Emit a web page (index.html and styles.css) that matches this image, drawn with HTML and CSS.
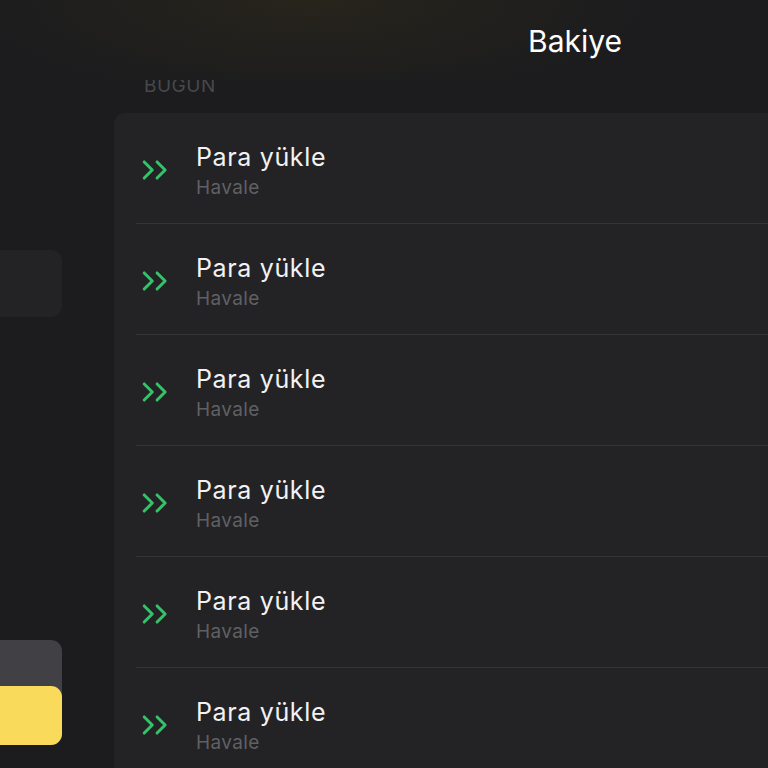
FILE: index.html
```html
<!DOCTYPE html>
<html lang="tr">
<head>
<meta charset="utf-8">
<link rel="stylesheet" href="styles.css">
</head>
<body>
<div class="app">
  <aside class="sidebar">
    <div class="side-card"></div>
    <div class="side-spacer"></div>
    <div class="side-stack">
      <div class="side-yellow"></div>
    </div>
  </aside>
  <main class="main">
    <div class="section-label">BUGÜN</div>
    <div class="list">
      <div class="row">
        <svg class="icon" viewBox="0 0 28 24"><path d="M3 4.5 L10.5 12 L3 19.5 M15 4.5 L22.5 12 L15 19.5"/></svg>
        <div class="texts"><div class="title">Para yükle</div><div class="sub">Havale</div></div>
      </div>
      <div class="row">
        <svg class="icon" viewBox="0 0 28 24"><path d="M3 4.5 L10.5 12 L3 19.5 M15 4.5 L22.5 12 L15 19.5"/></svg>
        <div class="texts"><div class="title">Para yükle</div><div class="sub">Havale</div></div>
      </div>
      <div class="row">
        <svg class="icon" viewBox="0 0 28 24"><path d="M3 4.5 L10.5 12 L3 19.5 M15 4.5 L22.5 12 L15 19.5"/></svg>
        <div class="texts"><div class="title">Para yükle</div><div class="sub">Havale</div></div>
      </div>
      <div class="row">
        <svg class="icon" viewBox="0 0 28 24"><path d="M3 4.5 L10.5 12 L3 19.5 M15 4.5 L22.5 12 L15 19.5"/></svg>
        <div class="texts"><div class="title">Para yükle</div><div class="sub">Havale</div></div>
      </div>
      <div class="row">
        <svg class="icon" viewBox="0 0 28 24"><path d="M3 4.5 L10.5 12 L3 19.5 M15 4.5 L22.5 12 L15 19.5"/></svg>
        <div class="texts"><div class="title">Para yükle</div><div class="sub">Havale</div></div>
      </div>
      <div class="row">
        <svg class="icon" viewBox="0 0 28 24"><path d="M3 4.5 L10.5 12 L3 19.5 M15 4.5 L22.5 12 L15 19.5"/></svg>
        <div class="texts"><div class="title">Para yükle</div><div class="sub">Havale</div></div>
      </div>
    </div>
  </main>
  <header class="header">
    <div class="header-title">Bakiye</div>
  </header>
</div>
</body>
</html>
```
FILE: styles.css
```css
html, body {
  margin: 0;
  padding: 0;
  background: #1c1c1e;
  width: 768px;
  height: 768px;
  overflow: hidden;
  font-family: "Inter", "Roboto", "Liberation Sans", sans-serif;
}
.app {
  position: relative;
  display: grid;
  grid-template-columns: 114px 1fr;
  width: 768px;
  height: 768px;
}
.sidebar {
  display: flex;
  flex-direction: column;
  padding-top: 250px;
}
.side-card {
  width: 62px;
  height: 67px;
  background: #232325;
  border-radius: 0 11px 11px 0;
}
.side-spacer {
  height: 323px;
}
.side-stack {
  width: 62px;
  padding-top: 46px;
  background: #414145;
  border-radius: 0 11px 11px 0;
}
.side-yellow {
  height: 59px;
  background: #f9da5b;
  border-radius: 0 11px 11px 0;
}
.main {
  display: flex;
  flex-direction: column;
  padding-top: 75px;
}
.section-label {
  padding-left: 30px;
  height: 38px;
  font-size: 19px;
  line-height: 22px;
  color: #48484b;
  letter-spacing: 0.5px;
}
.list {
  flex: 1;
  background: #232325;
  border-top-left-radius: 11px;
  padding-left: 22px;
}
.row {
  height: 110px;
  border-bottom: 1px solid #343437;
  display: flex;
  align-items: flex-start;
}
.icon {
  width: 30px;
  height: 26px;
  margin-left: 5px;
  margin-top: 44px;
  fill: none;
  stroke: #34c26a;
  stroke-width: 2.8;
  stroke-linecap: round;
  stroke-linejoin: round;
}
.texts {
  margin-left: 25px;
  padding-top: 30px;
}
.title {
  font-size: 25px;
  line-height: 28px;
  letter-spacing: 0.65px;
  color: #f2f2f4;
}
.sub {
  margin-top: 5px;
  font-size: 19px;
  line-height: 24px;
  letter-spacing: 0.4px;
  color: #606064;
}
.header {
  position: absolute;
  top: 0;
  left: 0;
  right: 0;
  height: 80px;
  background:
    radial-gradient(ellipse 340px 100px at 310px 0px, rgba(40, 37, 27, 0.9), rgba(28, 28, 30, 0) 100%),
    #1c1c1e;
  display: flex;
  align-items: flex-start;
}
.header-title {
  margin-left: 528px;
  margin-top: 23px;
  font-size: 30px;
  line-height: 36px;
  color: #ffffff;
}
```
